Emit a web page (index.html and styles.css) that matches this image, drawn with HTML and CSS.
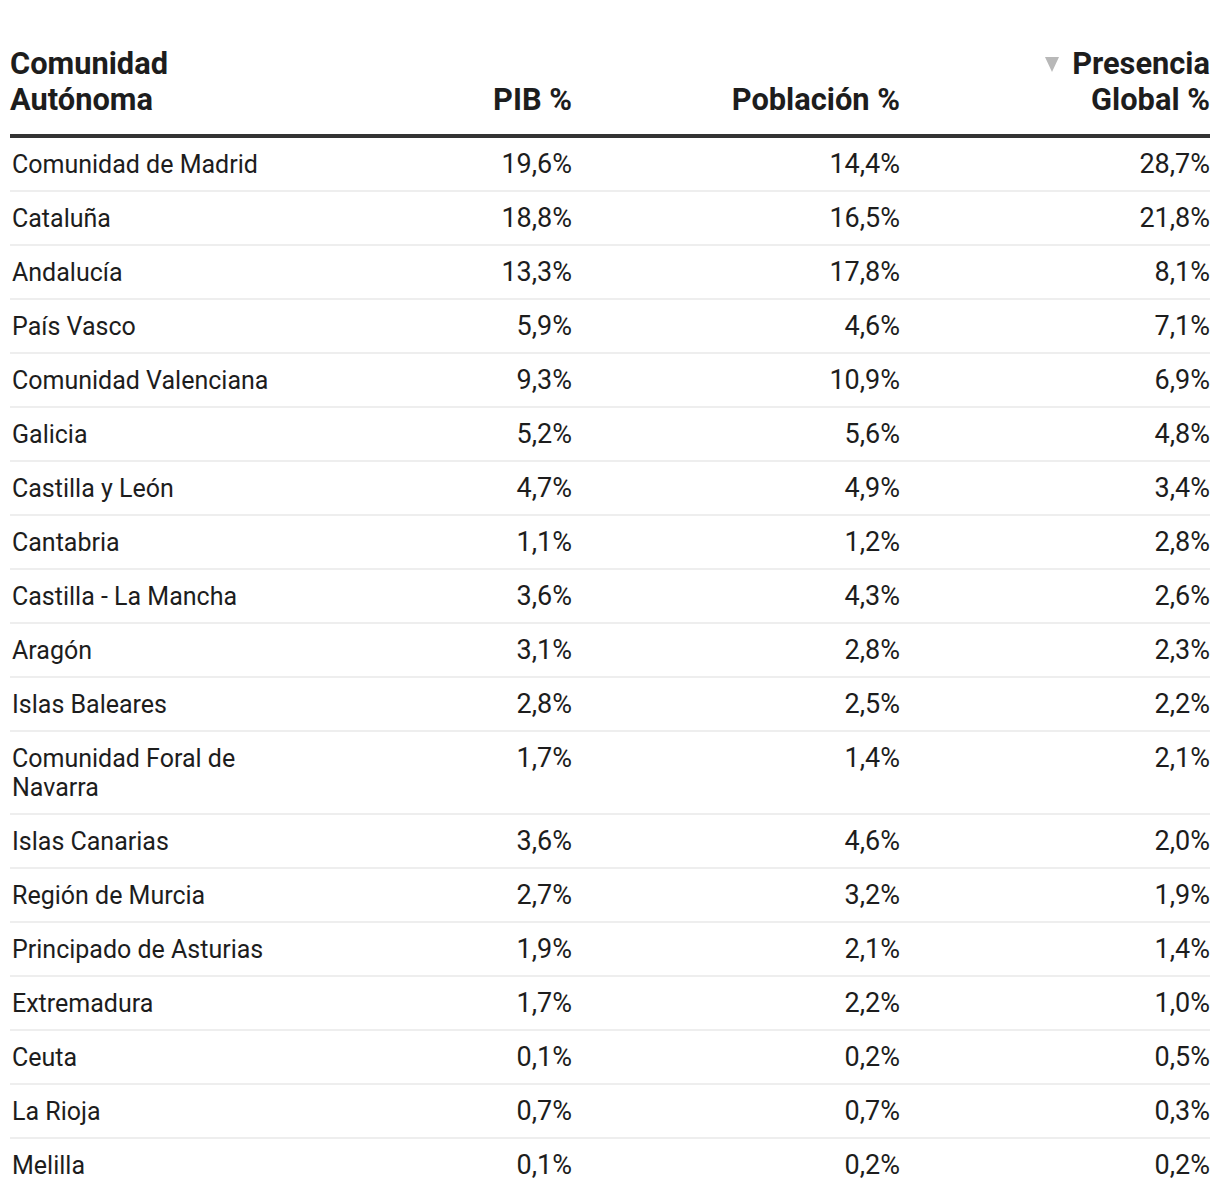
FILE: index.html
```html
<!DOCTYPE html>
<html lang="es">
<head>
<meta charset="utf-8">
<title>Tabla</title>
<link rel="stylesheet" href="styles.css">
</head>
<body>
<table class="tbl">
  <thead>
    <tr>
      <th class="c1">Comunidad<br>Autónoma</th>
      <th class="c2 num">PIB %</th>
      <th class="c3 num">Población %</th>
      <th class="c4 num"><span class="sort"></span>Presencia<br>Global %</th>
    </tr>
  </thead>
  <tbody>
    <tr><td>Comunidad de Madrid</td><td class="num">19,6%</td><td class="num">14,4%</td><td class="num">28,7%</td></tr>
    <tr><td>Cataluña</td><td class="num">18,8%</td><td class="num">16,5%</td><td class="num">21,8%</td></tr>
    <tr><td>Andalucía</td><td class="num">13,3%</td><td class="num">17,8%</td><td class="num">8,1%</td></tr>
    <tr><td>País Vasco</td><td class="num">5,9%</td><td class="num">4,6%</td><td class="num">7,1%</td></tr>
    <tr><td>Comunidad Valenciana</td><td class="num">9,3%</td><td class="num">10,9%</td><td class="num">6,9%</td></tr>
    <tr><td>Galicia</td><td class="num">5,2%</td><td class="num">5,6%</td><td class="num">4,8%</td></tr>
    <tr><td>Castilla y León</td><td class="num">4,7%</td><td class="num">4,9%</td><td class="num">3,4%</td></tr>
    <tr><td>Cantabria</td><td class="num">1,1%</td><td class="num">1,2%</td><td class="num">2,8%</td></tr>
    <tr><td>Castilla - La Mancha</td><td class="num">3,6%</td><td class="num">4,3%</td><td class="num">2,6%</td></tr>
    <tr><td>Aragón</td><td class="num">3,1%</td><td class="num">2,8%</td><td class="num">2,3%</td></tr>
    <tr><td>Islas Baleares</td><td class="num">2,8%</td><td class="num">2,5%</td><td class="num">2,2%</td></tr>
    <tr><td>Comunidad Foral de Navarra</td><td class="num">1,7%</td><td class="num">1,4%</td><td class="num">2,1%</td></tr>
    <tr><td>Islas Canarias</td><td class="num">3,6%</td><td class="num">4,6%</td><td class="num">2,0%</td></tr>
    <tr><td>Región de Murcia</td><td class="num">2,7%</td><td class="num">3,2%</td><td class="num">1,9%</td></tr>
    <tr><td>Principado de Asturias</td><td class="num">1,9%</td><td class="num">2,1%</td><td class="num">1,4%</td></tr>
    <tr><td>Extremadura</td><td class="num">1,7%</td><td class="num">2,2%</td><td class="num">1,0%</td></tr>
    <tr><td>Ceuta</td><td class="num">0,1%</td><td class="num">0,2%</td><td class="num">0,5%</td></tr>
    <tr><td>La Rioja</td><td class="num">0,7%</td><td class="num">0,7%</td><td class="num">0,3%</td></tr>
    <tr><td>Melilla</td><td class="num">0,1%</td><td class="num">0,2%</td><td class="num">0,2%</td></tr>
  </tbody>
</table>
</body>
</html>
```
FILE: styles.css
```css
html, body {
  margin: 0;
  padding: 0;
  background: #ffffff;
}
body {
  padding: 46px 10px 0 10px;
  font-family: Roboto, "Liberation Sans", sans-serif;
  color: #1d1d1d;
}
.tbl {
  width: 1200px;
  border-collapse: collapse;
  table-layout: fixed;
}
.tbl th {
  font-weight: 700;
  font-size: 30.8px;
  line-height: 36px;
  vertical-align: bottom;
  text-align: left;
  padding: 0 0 16px 0;
  border-bottom: 4px solid #333333;
  color: #1d1d1d;
}
.tbl th.num { text-align: right; }
.tbl .c1 { width: 280px; }
.tbl .c2 { width: 282px; }
.tbl .c3 { width: 328px; }
.tbl .c4 { width: 310px; }
.tbl td {
  font-size: 25px;
  line-height: 29px;
  padding: 12px 0 11px 2px;
  vertical-align: baseline;
  border-bottom: 2px solid #eeeeee;
}
.tbl tr:last-child td { border-bottom: none; }
.tbl td.num {
  text-align: right;
  padding-left: 0;
  font-size: 27px;
  line-height: 27.7px;
}
.sort {
  display: inline-block;
  width: 0;
  height: 0;
  border-left: 7.5px solid transparent;
  border-right: 7.5px solid transparent;
  border-top: 15px solid #b8b8b8;
  margin-right: 13px;
  vertical-align: 2px;
}
```
